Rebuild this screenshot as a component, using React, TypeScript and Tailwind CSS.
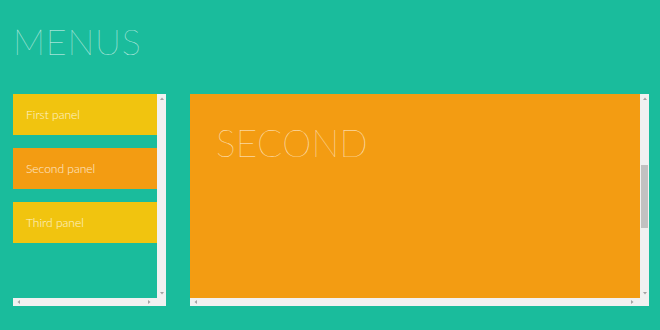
import React from 'react';

const panels = [
  { label: 'First panel', bg: 'bg-[#f1c40f]' },
  { label: 'Second panel', bg: 'bg-[#f39c12]' },
  { label: 'Third panel', bg: 'bg-[#f1c40f]' },
];

const Arrow = ({ dir }: { dir: 'up' | 'down' | 'left' | 'right' }) => {
  const pts = {
    up: '1,4 3,1.5 5,4',
    down: '1,2 3,4.5 5,2',
    left: '4,1 1.5,3 4,5',
    right: '2,1 4.5,3 2,5',
  }[dir];
  return (
    <svg width="6" height="6" viewBox="0 0 6 6" className="block">
      <polygon points={pts} fill="#a3a3a3" />
    </svg>
  );
};

// fake scroll frame: content + vertical bar + horizontal bar
const ScrollFrame = ({ children, thumb }: { children: React.ReactNode; thumb?: boolean }) => (
  <div className="flex flex-col h-full bg-[#f1f1f1]">
    <div className="flex flex-1 min-h-0">
      <div className="flex-1 min-w-0">{children}</div>
      <div className="w-[9px] flex flex-col items-center py-[2px] bg-[#f1f1f1]">
        <Arrow dir="up" />
        <div className="flex-1">
          {thumb && <div className="w-[7px] h-[63px] bg-[#c1c1c1] mt-[63px]" />}
        </div>
        <Arrow dir="down" />
      </div>
    </div>
    <div className="h-[8px] flex items-center justify-between px-[3px] pr-[14px] bg-[#f1f1f1]">
      <Arrow dir="left" />
      <Arrow dir="right" />
    </div>
  </div>
);

export default function App() {
  return (
    <div
      className="w-[660px] h-[330px] bg-[#1abc9c] overflow-hidden pl-[13px] pr-[11px]"
      style={{ fontFamily: 'Lato, "Open Sans", sans-serif' }}
    >
      <h1 className="h-[94px] pt-[19px] text-[36px] leading-[44px] font-thin text-white/85 tracking-[0.7px]">
        MENUS
      </h1>
      <div className="flex gap-[24px] h-[212px]">
        <div className="w-[153px] h-full shrink-0">
          <ScrollFrame>
            <div className="h-full bg-[#1abc9c] flex flex-col gap-[13px]">
              {panels.map(p => (
                <div
                  key={p.label}
                  className={`${p.bg} h-[41px] flex items-center pl-[13px] text-[12px] font-light text-white/80`}
                >
                  {p.label}
                </div>
              ))}
            </div>
          </ScrollFrame>
        </div>
        <div className="w-[459px] h-full shrink-0">
          <ScrollFrame thumb>
            <div className="h-full bg-[#f39c12] pt-[26px] pl-[26px]">
              <h2 className="text-[37px] leading-[46px] font-thin text-white/85 tracking-[0.3px]">SECOND</h2>
            </div>
          </ScrollFrame>
        </div>
      </div>
    </div>
  );
}
